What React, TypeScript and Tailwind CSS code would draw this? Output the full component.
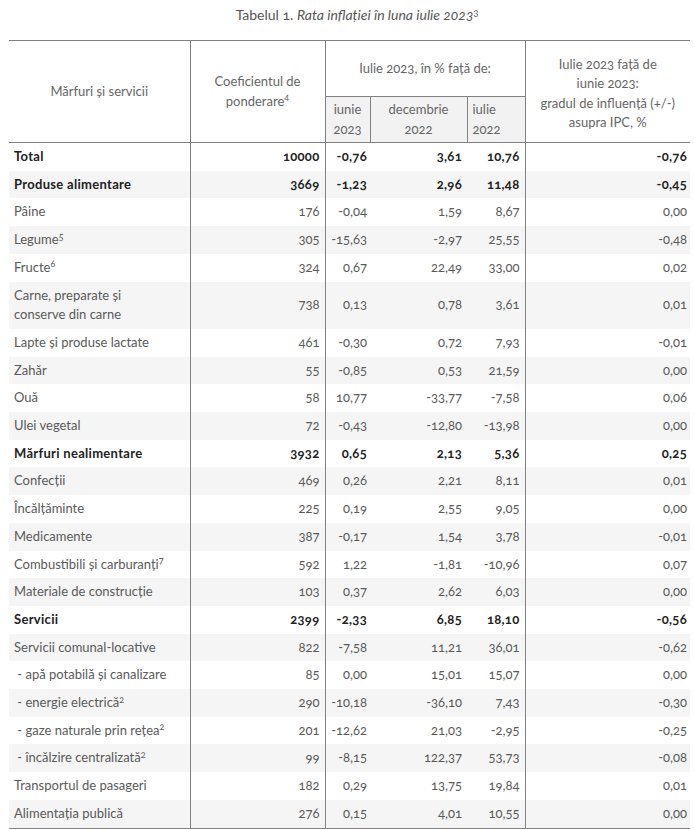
type Row = {
  name: React.ReactNode;
  w: string;
  a: string;
  b: string;
  c: string;
  d: string;
  bold?: boolean;
};

function Sup({ children }: { children: React.ReactNode }) {
  return <sup className="text-[9px] leading-none">{children}</sup>;
}

const rows: Row[] = [
  { name: 'Total', w: '10000', a: '-0,76', b: '3,61', c: '10,76', d: '-0,76', bold: true },
  { name: 'Produse alimentare', w: '3669', a: '-1,23', b: '2,96', c: '11,48', d: '-0,45', bold: true },
  { name: 'Pâine', w: '176', a: '-0,04', b: '1,59', c: '8,67', d: '0,00' },
  { name: <>Legume<Sup>5</Sup></>, w: '305', a: '-15,63', b: '-2,97', c: '25,55', d: '-0,48' },
  { name: <>Fructe<Sup>6</Sup></>, w: '324', a: '0,67', b: '22,49', c: '33,00', d: '0,02' },
  {
    name: <>Carne, preparate și<br />conserve din carne</>,
    w: '738', a: '0,13', b: '0,78', c: '3,61', d: '0,01',
  },
  { name: 'Lapte și produse lactate', w: '461', a: '-0,30', b: '0,72', c: '7,93', d: '-0,01' },
  { name: 'Zahăr', w: '55', a: '-0,85', b: '0,53', c: '21,59', d: '0,00' },
  { name: 'Ouă', w: '58', a: '10,77', b: '-33,77', c: '-7,58', d: '0,06' },
  { name: 'Ulei vegetal', w: '72', a: '-0,43', b: '-12,80', c: '-13,98', d: '0,00' },
  { name: 'Mărfuri nealimentare', w: '3932', a: '0,65', b: '2,13', c: '5,36', d: '0,25', bold: true },
  { name: 'Confecții', w: '469', a: '0,26', b: '2,21', c: '8,11', d: '0,01' },
  { name: 'Încălțăminte', w: '225', a: '0,19', b: '2,55', c: '9,05', d: '0,00' },
  { name: 'Medicamente', w: '387', a: '-0,17', b: '1,54', c: '3,78', d: '-0,01' },
  { name: <>Combustibili și carburanți<Sup>7</Sup></>, w: '592', a: '1,22', b: '-1,81', c: '-10,96', d: '0,07' },
  { name: 'Materiale de construcție', w: '103', a: '0,37', b: '2,62', c: '6,03', d: '0,00' },
  { name: 'Servicii', w: '2399', a: '-2,33', b: '6,85', c: '18,10', d: '-0,56', bold: true },
  { name: 'Servicii comunal-locative', w: '822', a: '-7,58', b: '11,21', c: '36,01', d: '-0,62' },
  { name: '\u00a0- apă potabilă și canalizare', w: '85', a: '0,00', b: '15,01', c: '15,07', d: '0,00' },
  { name: <>{'\u00a0- energie electrică'}<Sup>2</Sup></>, w: '290', a: '-10,18', b: '-36,10', c: '7,43', d: '-0,30' },
  { name: <>{'\u00a0- gaze naturale prin rețea'}<Sup>2</Sup></>, w: '201', a: '-12,62', b: '21,03', c: '-2,95', d: '-0,25' },
  { name: <>{'\u00a0- încălzire centralizată'}<Sup>2</Sup></>, w: '99', a: '-8,15', b: '122,37', c: '53,73', d: '-0,08' },
  { name: 'Transportul de pasageri', w: '182', a: '0,29', b: '13,75', c: '19,84', d: '0,01' },
  { name: 'Alimentația publică', w: '276', a: '0,15', b: '4,01', c: '10,55', d: '0,00' },
];

export default function App() {
  return (
    <div className="w-[694px] bg-white font-['Lato','Liberation_Sans',sans-serif] text-[13px] text-[#5a5a5a] oldstyle-nums">
      <div className="pl-[20px] pt-[5px] pb-[15px] text-center text-[14px] leading-[20px] text-[#555]">
        Tabelul 1. <i>Rata inflației în luna iulie 2023</i>
        <Sup>3</Sup>
      </div>

      <table className="ml-[9px] w-[681px] table-fixed border-collapse">
        <colgroup>
          <col className="w-[181px]" />
          <col className="w-[135px]" />
          <col className="w-[45px]" />
          <col className="w-[97px]" />
          <col className="w-[58px]" />
          <col className="w-[165px]" />
        </colgroup>
        <thead className="text-[#666]">
          <tr className="h-[56px] border-t border-[#808080]">
            <th rowSpan={2} className="border-r border-b border-[#808080] px-[5px] text-center font-normal leading-[19.5px]">
              Mărfuri și servicii
            </th>
            <th rowSpan={2} className="border-r border-b border-[#808080] px-[5px] text-center font-normal leading-[19.5px]">
              Coeficientul de
              <br />
              ponderare<Sup>4</Sup>
            </th>
            <th colSpan={3} className="border-r border-b border-[#808080] px-[5px] text-center font-normal leading-[19.5px]">
              Iulie 2023, în % față de:
            </th>
            <th rowSpan={2} className="border-b border-[#808080] px-[5px] pt-[4px] text-center font-normal leading-[19.5px]">
              Iulie 2023 față de
              <br />
              iunie 2023:
              <br />
              gradul de influență (+/-)
              <br />
              asupra IPC, %
            </th>
          </tr>
          <tr>
            <th className="border-r border-b border-[#808080] bg-[#f2f2f2] px-[2px] py-[3px] text-center font-normal leading-[19.5px]">
              iunie
              <br />
              2023
            </th>
            <th className="border-r border-b border-[#808080] bg-[#f2f2f2] px-[5px] py-[3px] text-center font-normal leading-[19.5px]">
              decembrie
              <br />
              2022
            </th>
            <th className="border-r border-b border-[#808080] bg-[#f2f2f2] px-[5px] py-[3px] text-left font-normal leading-[19.5px]">
              iulie
              <br />
              2022
            </th>
          </tr>
        </thead>
        <tbody className="border-b border-[#808080]">
          {rows.map((r, i) => (
            <tr
              key={i}
              className={`${i % 2 === 1 ? 'bg-[#f5f5f5]' : 'bg-white'} ${r.bold ? 'font-bold tracking-[0.3px] text-[#222]' : ''}`}
            >
              <td className="border-r border-[#808080] px-[5px] py-[4px] text-left leading-[19.7px]">{r.name}</td>
              <td className="border-r border-[#808080] px-[5px] py-[4px] text-right leading-[19.7px]">{r.w}</td>
              <td className="px-[3px] py-[4px] text-right leading-[19.7px]">{r.a}</td>
              <td className="px-[5px] py-[4px] text-right leading-[19.7px]">{r.b}</td>
              <td className="border-r border-[#808080] px-[5px] py-[4px] text-right leading-[19.7px]">{r.c}</td>
              <td className="px-[3px] py-[4px] text-right leading-[19.7px]">{r.d}</td>
            </tr>
          ))}
        </tbody>
      </table>
    </div>
  );
}
